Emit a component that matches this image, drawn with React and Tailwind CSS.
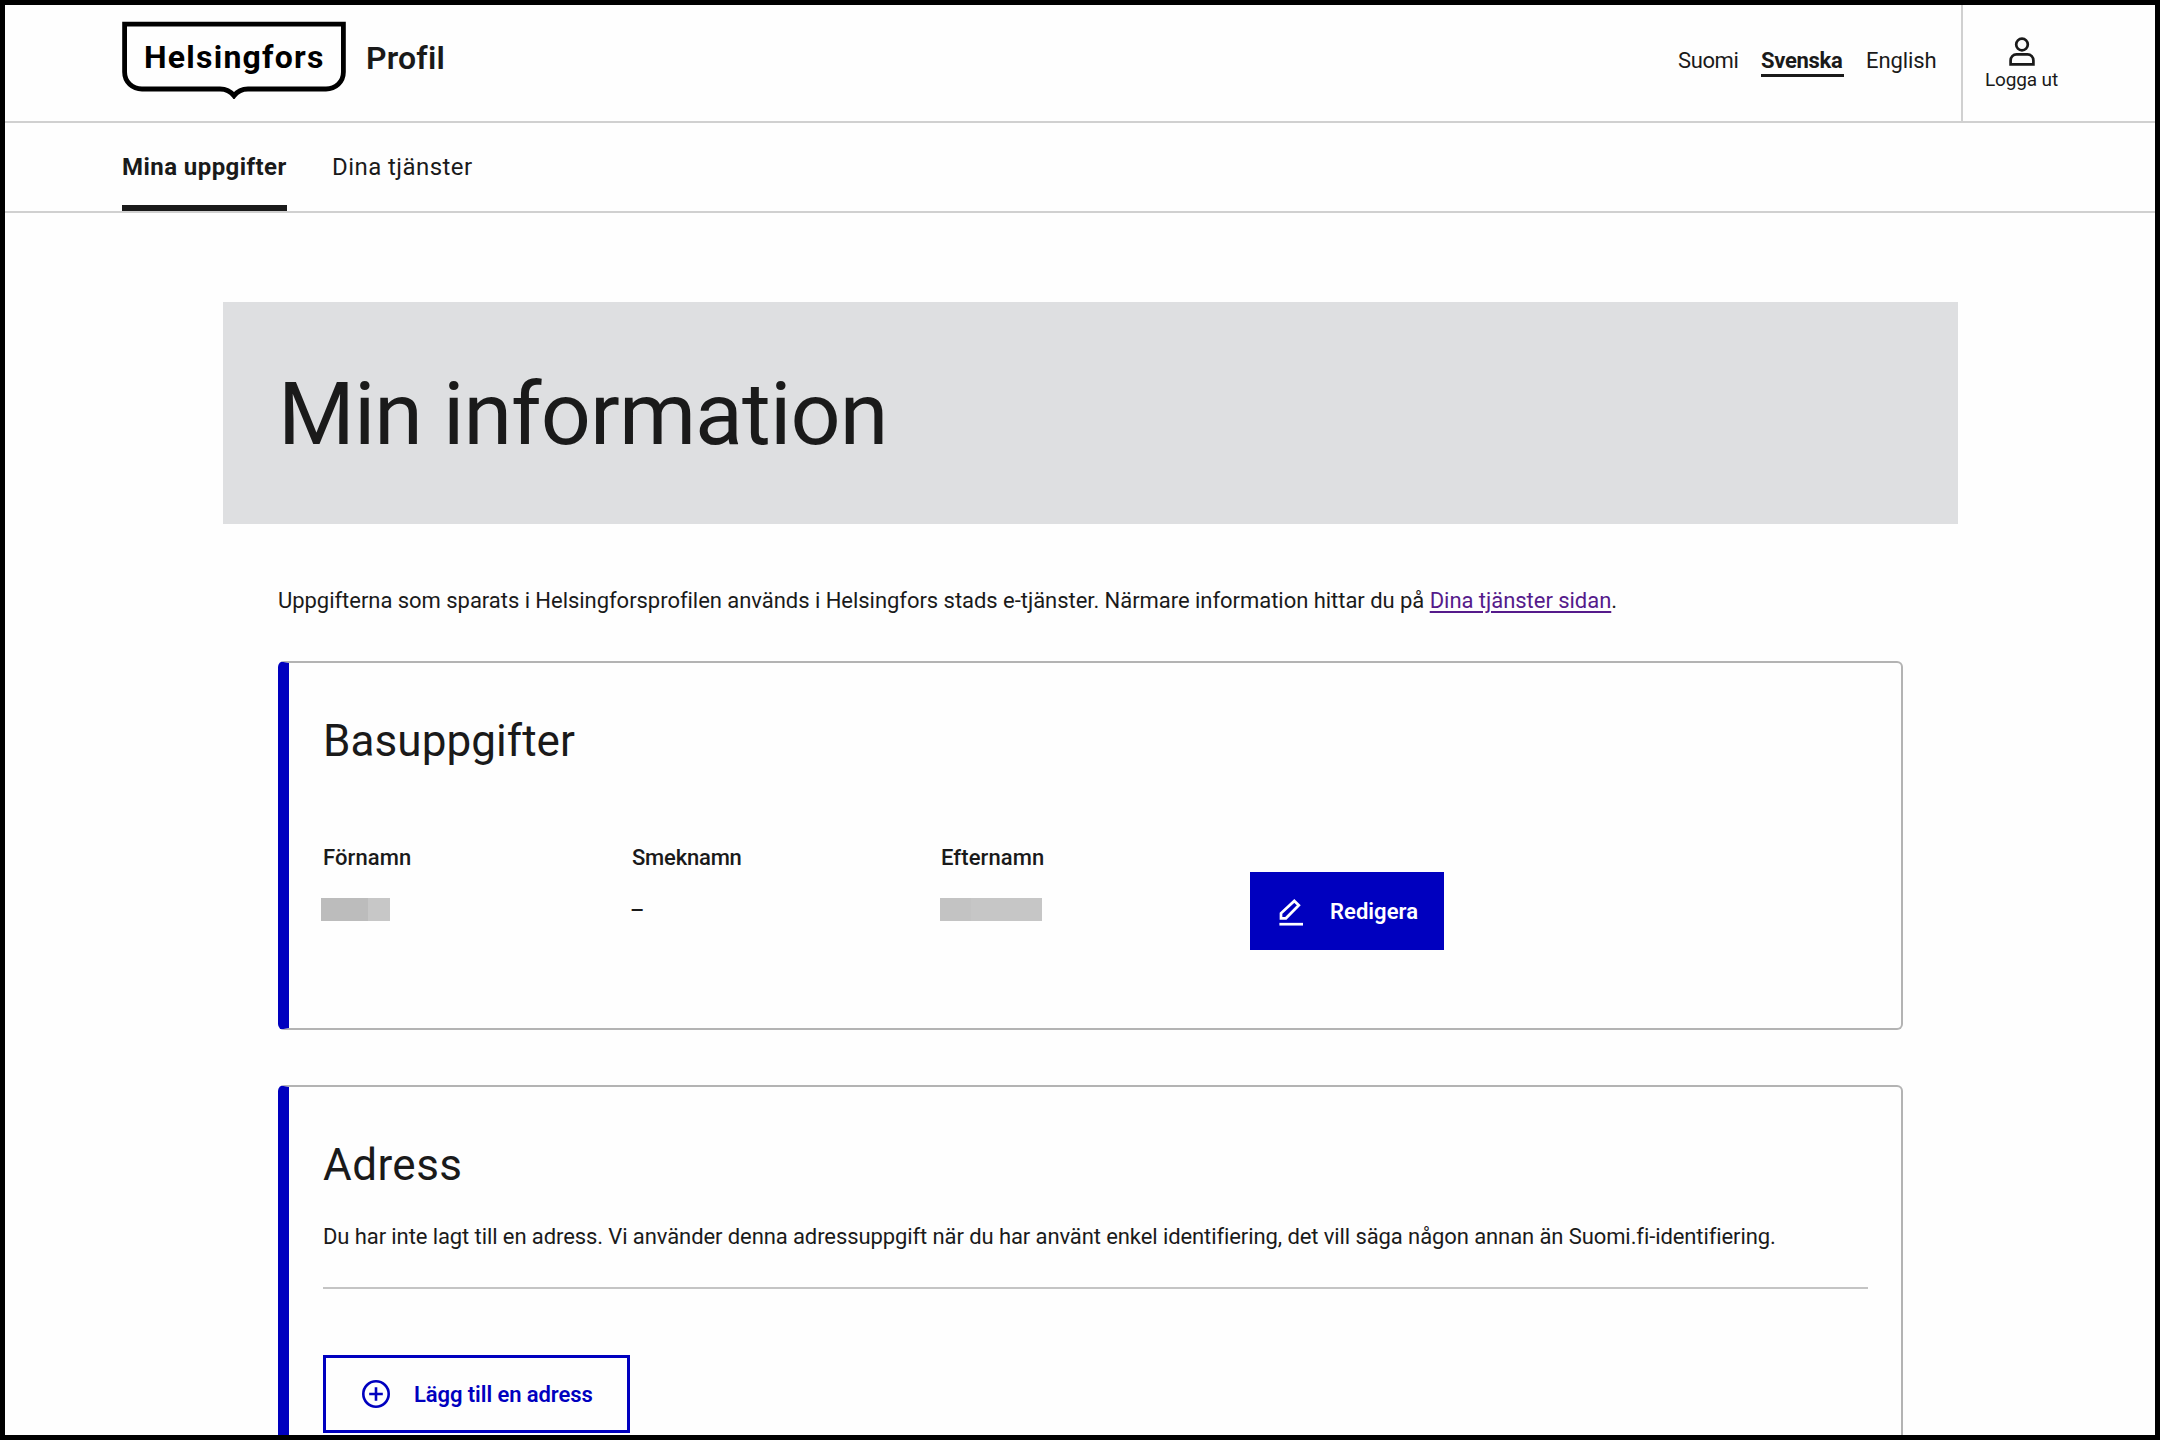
import React from "react";

function Logo() {
  return (
    <a className="grid h-[78px] w-[224px] text-black">
      <svg viewBox="0 0 224 78" className="col-start-1 row-start-1 h-[78px] w-[224px]" fill="none">
        <path
          d="M2.6 3.1H221.4V51C221.4 61 213.5 68 204 68H126C119 68 114.500 71.500 112 74.800C109.500 71.500 105 68 98 68H20C10.500 68 2.600 61 2.600 51Z"
          stroke="#000"
          strokeWidth="4.800"
        />
      </svg>
      <span className="col-start-1 row-start-1 pl-[22px] text-[32px] leading-[72px] font-bold tracking-[1.23px]">
        Helsingfors
      </span>
    </a>
  );
}

function UserIcon() {
  return (
    <svg viewBox="0 0 30 30" className="h-[30px] w-[30px]" fill="none" stroke="#1a1a1a" strokeWidth="2.700">
      <circle cx="15" cy="7.500" r="5.800" />
      <path d="M3.600 27.300V23.500C3.600 20 6.200 17.300 9.500 17.300H20.500C23.800 17.300 26.400 20 26.400 23.500V27.300Z" />
    </svg>
  );
}

function PenIcon() {
  return (
    <svg viewBox="0 0 36 36" className="h-9 w-9" fill="none" stroke="#fff">
      <path d="M8 25.300V20.300L21.300 7.900L25.800 12.200L12.900 25.300Z" strokeWidth="2.700" />
      <path d="M6.400 31.200H30" strokeWidth="2.700" />
    </svg>
  );
}

function PlusIcon() {
  return (
    <svg viewBox="0 0 28 28" className="h-7 w-7" fill="none" stroke="#0000bf" strokeWidth="2.600">
      <circle cx="14" cy="14" r="12.700" />
      <path d="M14 7.200V20.800M7.200 14H20.800" />
    </svg>
  );
}

function Card({ title, titleClass, className, children }) {
  return (
    <section
      className={`w-[1625px] rounded-[6px] border-2 border-l-[11px] border-[#b3b3b3] border-l-[#0000bf] pt-12 pl-[34px] ${className}`}
    >
      <h2 className={`text-[44px] leading-[60px] ${titleClass}`}>{title}</h2>
      {children}
    </section>
  );
}

function Field({ label, labelClass, children }) {
  return (
    <div className="w-[309px]">
      <div className={`text-[22px] leading-[33px] font-medium ${labelClass}`}>{label}</div>
      {children}
    </div>
  );
}

export default function App() {
  return (
    <div className="h-[1440px] w-[2160px] overflow-hidden border-[5px] border-black bg-[#fefefe] font-[Roboto,sans-serif] text-[#1a1a1a]">
      <header>
        <div className="flex h-[118px] border-b-2 border-[#d0d0d0] pl-[117px]">
          <div className="flex gap-[20px] pt-4">
            <Logo />
            <span className="text-[32px] leading-[75px] font-semibold tracking-[0.2px]">Profil</span>
          </div>
          <div className="ml-auto flex">
            <div className="flex h-[111px] items-center text-[22px] leading-[27px]">
              <div className="w-[83px] tracking-[-0.38px]">Suomi</div>
              <div className="w-[105px]">
                <span className="inline-block w-[83px] border-y-[3px] border-t-transparent border-b-[#1a1a1a] font-bold tracking-[-0.3px]">
                  Svenska
                </span>
              </div>
              <div className="w-[95px] tracking-[-0.1px]">English</div>
            </div>
            <div className="w-[194px] border-l-2 border-[#d0d0d0] pt-8 pl-[21px]">
              <div className="flex w-[75px] flex-col items-center">
                <UserIcon />
                <span className="text-[19px] leading-[25px] tracking-[-0.13px]">Logga ut</span>
              </div>
            </div>
          </div>
        </div>
        <nav className="flex h-[90px] gap-[45px] border-b-2 border-[#d0d0d0] pl-[117px] text-[24px]">
          <a className="flex w-[165px] items-center border-y-[6px] border-t-transparent border-b-[#1a1a1a] font-bold whitespace-nowrap tracking-[0.44px]">
            Mina uppgifter
          </a>
          <a className="flex items-center tracking-[0.44px]">Dina tjänster</a>
        </nav>
      </header>

      <main>
        <div className="mt-[89px] ml-[218px] flex h-[222px] w-[1735px] items-center bg-[#dedfe1] pt-px pl-[55px]">
          <h1 className="text-[88px] leading-[100px] tracking-[-0.93px]">Min information</h1>
        </div>

        <div className="ml-[273px]">
          <p className="mt-[60px] text-[22px] leading-[33px] tracking-[-0.038px] whitespace-nowrap">
            Uppgifterna som sparats i Helsingforsprofilen används i Helsingfors stads e-tjänster. Närmare information
            hittar du på{" "}
            <a className="text-[#551a8b] underline decoration-2 underline-offset-[3px]">Dina tjänster sidan</a>.
          </p>

          <Card title="Basuppgifter" titleClass="tracking-[0.08px]" className="mt-11 h-[369px]">
            <div className="mt-[70px] flex">
              <Field label="Förnamn" labelClass="tracking-[0.1px]">
                <div className="mt-6 -ml-0.5 flex h-[23px]">
                  <div className="w-[47px] bg-[#bcbcbc]" />
                  <div className="w-[22px] bg-[#c7c7c7]" />
                </div>
              </Field>
              <Field label="Smeknamn" labelClass="tracking-[-0.2px]">
                <div className="mt-5 -ml-0.5 text-[22px] leading-[33px] font-medium">–</div>
              </Field>
              <Field label="Efternamn" labelClass="tracking-[0.1px]">
                <div className="mt-6 -ml-px flex h-[23px]">
                  <div className="w-[31px] bg-[#c3c3c3]" />
                  <div className="w-[71px] bg-[#c6c6c6]" />
                </div>
              </Field>
              <button className="mt-[31px] flex h-[78px] w-[194px] items-center bg-[#0000bf] pl-[23px] text-[22px] font-semibold tracking-[0.05px] text-white">
                <PenIcon />
                <span className="ml-[21px]">Redigera</span>
              </button>
            </div>
          </Card>

          <Card title="Adress" titleClass="tracking-[0.45px]" className="mt-[55px] h-[500px]">
            <p className="mt-[25px] text-[22px] leading-[33px] tracking-[-0.093px] whitespace-nowrap">
              Du har inte lagt till en adress. Vi använder denna adressuppgift när du har använt enkel identifiering,
              det vill säga någon annan än Suomi.fi-identifiering.
            </p>
            <div className="mt-[34px] h-0.5 w-[1545px] bg-[#c4c4c4]" />
            <button className="mt-[66px] flex h-[78px] w-[307px] items-center border-[3px] border-[#0000bf] pl-9 text-[22px] font-semibold tracking-[-0.08px] whitespace-nowrap text-[#0000bf]">
              <PlusIcon />
              <span className="ml-6">Lägg till en adress</span>
            </button>
          </Card>
        </div>
      </main>
    </div>
  );
}
